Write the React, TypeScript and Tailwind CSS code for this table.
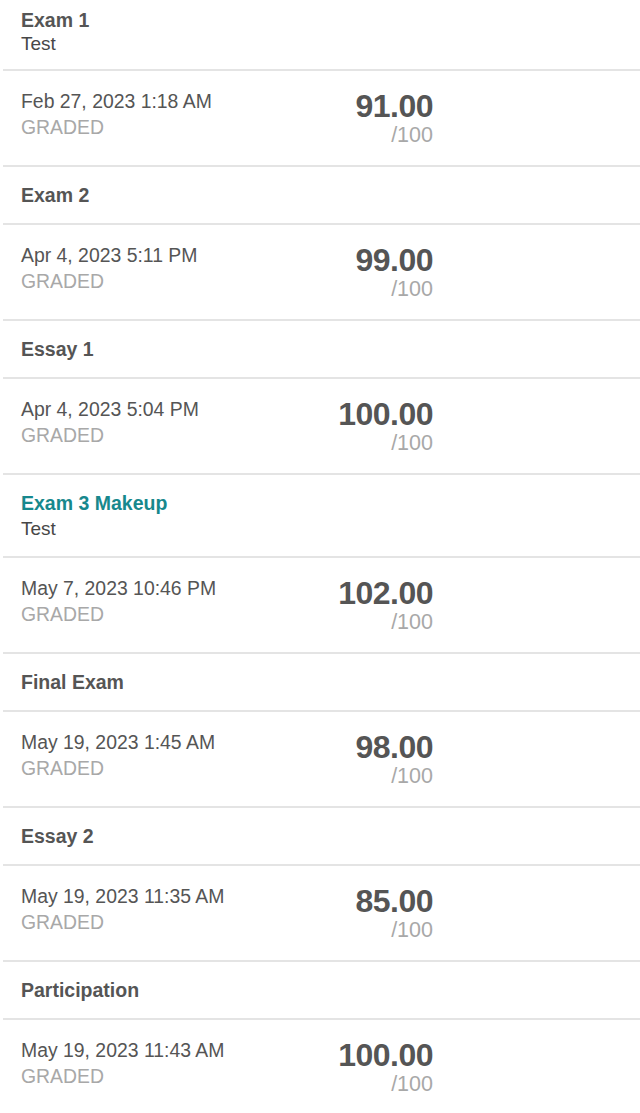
import React from 'react';

interface GradeItem {
  title: string;
  subtitle?: string;
  highlight?: boolean;
  date: string;
  score: string;
}

const items: GradeItem[] = [
  { title: 'Exam 1', subtitle: 'Test', date: 'Feb 27, 2023 1:18 AM', score: '91.00' },
  { title: 'Exam 2', date: 'Apr 4, 2023 5:11 PM', score: '99.00' },
  { title: 'Essay 1', date: 'Apr 4, 2023 5:04 PM', score: '100.00' },
  { title: 'Exam 3 Makeup', subtitle: 'Test', highlight: true, date: 'May 7, 2023 10:46 PM', score: '102.00' },
  { title: 'Final Exam', date: 'May 19, 2023 1:45 AM', score: '98.00' },
  { title: 'Essay 2', date: 'May 19, 2023 11:35 AM', score: '85.00' },
  { title: 'Participation', date: 'May 19, 2023 11:43 AM', score: '100.00' },
];

const Header: React.FC<{ item: GradeItem; first: boolean }> = ({ item, first }) => {
  const titleCls = item.highlight ? 'text-[#17888d]' : 'text-[#555555]';
  if (item.subtitle) {
    // dos linhas: titulo + tipo
    return (
      <div
        className={
          'ml-[3px] pl-[18px] border-b-2 border-[#e4e4e4] ' +
          (first ? 'h-[71px] pt-[9px] leading-[23px]' : 'h-[83px] pt-[16px] leading-[25px]')
        }
      >
        <div className={'font-bold text-[19.5px] ' + titleCls}>{item.title}</div>
        <div className="text-[19px] text-[#474747]">{item.subtitle}</div>
      </div>
    );
  }
  return (
    <div className="ml-[3px] pl-[18px] h-[58px] border-b-2 border-[#e4e4e4] flex items-center">
      <div className={'font-bold text-[19.5px] leading-[25px] ' + titleCls}>{item.title}</div>
    </div>
  );
};

const GradeRow: React.FC<{ item: GradeItem }> = ({ item }) => (
  <div className="ml-[3px] pl-[18px] pr-[207px] h-[96px] border-b-2 border-[#e4e4e4] flex justify-between pt-[17px]">
    <div>
      <div className="text-[19.4px] leading-[26px] text-[#555555]">{item.date}</div>
      <div className="text-[19.4px] leading-[26px] text-[#a8a8a8]">GRADED</div>
    </div>
    <div className="flex flex-col items-end">
      <div className="font-bold text-[32px] leading-[36px] text-[#555555] tracking-[-0.5px]">{item.score}</div>
      <div className="text-[21.5px] leading-[22px] text-[#a8a8a8]">/100</div>
    </div>
  </div>
);

export default function App() {
  return (
    <div className="w-[640px] h-[1113px] overflow-hidden bg-white" style={{ fontFamily: '"Liberation Sans", Arial, sans-serif' }}>
      {items.map((it, i) => (
        <div key={it.title}>
          <Header item={it} first={i === 0} />
          <GradeRow item={it} />
        </div>
      ))}
    </div>
  );
}
